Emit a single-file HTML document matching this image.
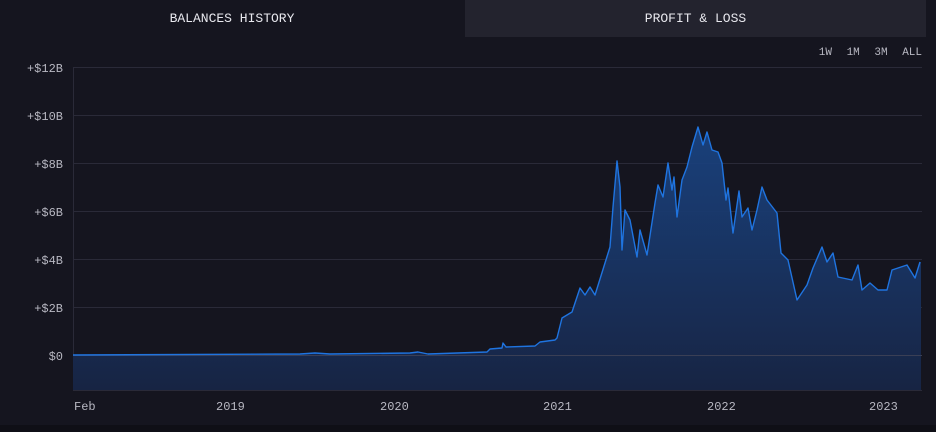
<!DOCTYPE html>
<html><head><meta charset="utf-8"><style>
html,body{margin:0;padding:0;background:#15151f;width:936px;height:432px;overflow:hidden;font-family:"Liberation Mono","DejaVu Sans Mono",monospace;}
.tab{position:absolute;top:0;height:37px;line-height:37px;text-align:center;color:#e8e8ee;font-size:13px;}
.t1{left:0;width:464px;}
.t2{left:465px;width:461px;background:#23232e;}
.rng{position:absolute;top:47px;right:14px;font-size:11px;color:#b8b8c2;word-spacing:8px;}
.yl{position:absolute;left:0;width:63px;text-align:right;font-size:12px;color:#b8b8c2;}
.xl{position:absolute;top:400px;font-size:12px;color:#b8b8c2;}
.bot{position:absolute;left:0;top:425px;width:936px;height:7px;background:#0f0f16;}
</style></head><body>
<div class="tab t1">BALANCES HISTORY</div>
<div class="tab t2">PROFIT &amp; LOSS</div>
<div class="rng">1W 1M 3M ALL</div>
<div class="yl" style="top:62px">+$12B</div>
<div class="yl" style="top:110px">+$10B</div>
<div class="yl" style="top:158px">+$8B</div>
<div class="yl" style="top:206px">+$6B</div>
<div class="yl" style="top:254px">+$4B</div>
<div class="yl" style="top:302px">+$2B</div>
<div class="yl" style="top:350px">$0</div>
<svg width="936" height="432" style="position:absolute;left:0;top:0">
<defs><linearGradient id="g" x1="0" y1="0" x2="0" y2="1"><stop offset="0" stop-color="#1a4585" stop-opacity="0.9"/><stop offset="1" stop-color="#172443"/></linearGradient></defs>
<g stroke="#2a2a38" stroke-width="1">
<line x1="73" y1="67.5" x2="922" y2="67.5"/><line x1="73" y1="115.5" x2="922" y2="115.5"/><line x1="73" y1="163.5" x2="922" y2="163.5"/><line x1="73" y1="211.5" x2="922" y2="211.5"/><line x1="73" y1="259.5" x2="922" y2="259.5"/><line x1="73" y1="307.5" x2="922" y2="307.5"/>
<line x1="73.5" y1="67" x2="73.5" y2="390"/>
</g>
<path d="M73,355 L300,354 L315,353 L330,354 L410,353 L418,352 L428,354 L487,352 L490,349 L502,348 L503,343 L506,347 L535,346 L540,342 L555,340 L557,338 L562,318 L572,312 L580,288 L585,295 L590,287 L595,295 L605,263 L610,247 L613,207 L617,161 L620,187 L622,250 L625,210 L630,220 L637,257 L640,230 L647,255 L655,203 L658,185 L663,197 L668,163 L672,190 L674,177 L677,217 L682,180 L687,167 L692,147 L698,127 L703,145 L707,132 L712,150 L718,152 L722,163 L726,200 L728,188 L733,233 L739,191 L742,217 L748,208 L752,230 L757,210 L762,187 L767,200 L777,213 L781,253 L788,260 L797,300 L807,285 L813,268 L822,247 L827,262 L833,253 L838,277 L852,280 L858,265 L862,290 L870,283 L878,290 L887,290 L892,270 L907,265 L915,278 L920,262 L921,262 L921,390 L73,390 Z" fill="url(#g)"/>
<line x1="73" y1="355.5" x2="922" y2="355.5" stroke="#3a3f55" stroke-width="1"/>
<path d="M73,355 L300,354 L315,353 L330,354 L410,353 L418,352 L428,354 L487,352 L490,349 L502,348 L503,343 L506,347 L535,346 L540,342 L555,340 L557,338 L562,318 L572,312 L580,288 L585,295 L590,287 L595,295 L605,263 L610,247 L613,207 L617,161 L620,187 L622,250 L625,210 L630,220 L637,257 L640,230 L647,255 L655,203 L658,185 L663,197 L668,163 L672,190 L674,177 L677,217 L682,180 L687,167 L692,147 L698,127 L703,145 L707,132 L712,150 L718,152 L722,163 L726,200 L728,188 L733,233 L739,191 L742,217 L748,208 L752,230 L757,210 L762,187 L767,200 L777,213 L781,253 L788,260 L797,300 L807,285 L813,268 L822,247 L827,262 L833,253 L838,277 L852,280 L858,265 L862,290 L870,283 L878,290 L887,290 L892,270 L907,265 L915,278 L920,262" fill="none" stroke="#1f74e0" stroke-width="1.4" stroke-linejoin="round"/>
<line x1="73" y1="390.5" x2="922" y2="390.5" stroke="#2a2a38"/>
</svg>
<div class="xl" style="left:74px">Feb</div>
<div class="xl" style="left:216px">2019</div>
<div class="xl" style="left:380px">2020</div>
<div class="xl" style="left:543px">2021</div>
<div class="xl" style="left:707px">2022</div>
<div class="xl" style="left:869px">2023</div>
<div class="bot"></div>
</body></html>
